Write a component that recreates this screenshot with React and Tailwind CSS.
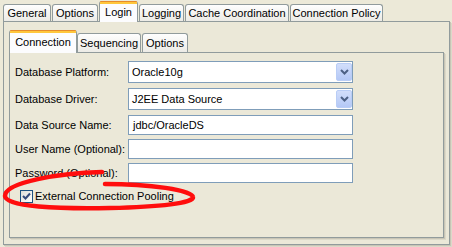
import React from 'react';

const FONT = { fontFamily: '"Liberation Sans", Arial, sans-serif' };

function Tab({ label, active, w, className = '' }) {
  if (active) {
    return (
      <div
        className={`relative z-10 -mb-px flex h-[21px] flex-col rounded-t-[3px] border-x border-[#919b9c] bg-[#fcfcfe] ${w} ${className}`}
      >
        <div className="h-[1px] rounded-t-[3px] bg-[#e68b2c]" />
        <div className="h-[2px] bg-[#ffc73c]" />
        <div className="flex flex-1 items-start justify-center pt-[1px] leading-[14px]">{label}</div>
      </div>
    );
  }
  return (
    <div
      className={`flex h-[17px] items-center justify-center rounded-t-[3px] border-x border-t border-[#919b9c] bg-gradient-to-b from-[#fefefe] to-[#ecebe6] leading-[14px] ${w} ${className}`}
    >
      {label}
    </div>
  );
}

function InnerTab({ label, active, w, className = '' }) {
  if (active) {
    return (
      <div
        className={`relative z-10 -mb-px flex h-[23px] flex-col rounded-t-[3px] border-x border-[#919b9c] bg-[#fcfcfe] ${w} ${className}`}
      >
        <div className="h-[1px] rounded-t-[3px] bg-[#e68b2c]" />
        <div className="h-[2px] bg-[#ffc73c]" />
        <div className="flex flex-1 items-start justify-center pt-[2px] leading-[14px]">{label}</div>
      </div>
    );
  }
  return (
    <div
      className={`flex h-[19px] items-center justify-center rounded-t-[3px] border-x border-t border-[#919b9c] bg-gradient-to-b from-[#fefefe] to-[#ecebe6] leading-[14px] ${w} ${className}`}
    >
      {label}
    </div>
  );
}

function Combo({ value }) {
  return (
    <div className="flex h-[22px] w-[225px] items-stretch border border-[#7f9db9] bg-white">
      <div className="flex flex-1 items-center pl-[3px]">{value}</div>
      <div className="my-[1px] flex w-[16px] items-center justify-center rounded-[2px] border border-[#b9cdf6] bg-gradient-to-b from-[#d2defb] to-[#b4c8f6]">
        <svg width="9" height="6" viewBox="0 0 9 6">
          <polyline points="1,1 4.5,4.5 8,1" fill="none" stroke="#4d6185" strokeWidth="2" />
        </svg>
      </div>
    </div>
  );
}

function Field({ value }) {
  return (
    <div className="flex h-[20px] w-[225px] items-center border border-[#7f9db9] bg-white pl-[4px]">
      {value}
    </div>
  );
}

export default function App() {
  return (
    <div
      className="relative h-[247px] w-[452px] overflow-hidden bg-[#ece9d8] text-[11px] text-black"
      style={FONT}
    >
      <div className="pl-[3px] pt-[1px]">
        {/* outer tabs */}
        <div className="flex h-[20px] items-end">
          <Tab label="General" w="w-[48px]" />
          <Tab label="Options" w="w-[46px]" className="ml-[1px]" />
          <Tab label="Login" w="w-[39px]" active className="ml-[1px]" />
          <Tab label="Logging" w="w-[45px]" className="ml-[1px]" />
          <Tab label="Cache Coordination" w="w-[104px]" className="ml-[1px]" />
          <Tab label="Connection Policy" w="w-[93px]" className="ml-[1px]" />
        </div>

        {/* outer panel */}
        <div className="h-[224px] w-[447px] border border-[#919b9c] bg-[#ebe8d8] pl-[5px] pt-[7px] shadow-[1px_1px_0_#c8c5b6,2px_2px_0_#dcd9c9]">
          <div className="flex h-[23px] items-end">
            <InnerTab label="Connection" w="w-[68px]" active />
            <InnerTab label="Sequencing" w="w-[64px]" />
            <InnerTab label="Options" w="w-[46px]" className="ml-[1px]" />
          </div>

          <div className="h-[186px] w-[435px] border border-[#919b9c] bg-[#ebe8d8] pl-[5px] pt-[8px] shadow-[1px_1px_0_#c8c5b6,2px_2px_0_#dcd9c9]">
            <div className="grid grid-cols-[113px_225px] items-center gap-y-[5px]">
              <div>Database Platform:</div>
              <Combo value="Oracle10g" />
              <div>Database Driver:</div>
              <Combo value="J2EE Data Source" />
              <div>Data Source Name:</div>
              <Field value="jdbc/OracleDS" />
              <div className="-mt-[1px]">User Name (Optional):</div>
              <div className="-mt-[1px]"><Field value="" /></div>
              <div className="-mt-[1px]">Password (Optional):</div>
              <div className="-mt-[1px]"><Field value="" /></div>
            </div>

            <div className="mt-[5px] flex items-center pl-[5px]">
              <div className="flex h-[13px] w-[13px] items-center justify-center border border-[#1c5180] bg-gradient-to-br from-[#dcdcd7] to-white">
                <svg width="9" height="9" viewBox="0 0 9 9">
                  <polyline points="1,4 3.5,6.5 8,1.5" fill="none" stroke="#33497a" strokeWidth="2" />
                </svg>
              </div>
              <span className="ml-[2px]">External Connection Pooling</span>
            </div>
          </div>
        </div>
      </div>

      {/* red annotation ellipse */}
      <svg className="pointer-events-none absolute left-0 top-0" width="452" height="247">
        <path
          d="M102 172 C 60 173, 5 182, 5 196 C 5 207, 60 209, 110 208 C 160 207, 194 203, 193 197 C 192 190, 150 184, 105 184"
          fill="none"
          stroke="#ff0d0d"
          strokeWidth="4.5"
          strokeLinecap="round"
        />
      </svg>
    </div>
  );
}
